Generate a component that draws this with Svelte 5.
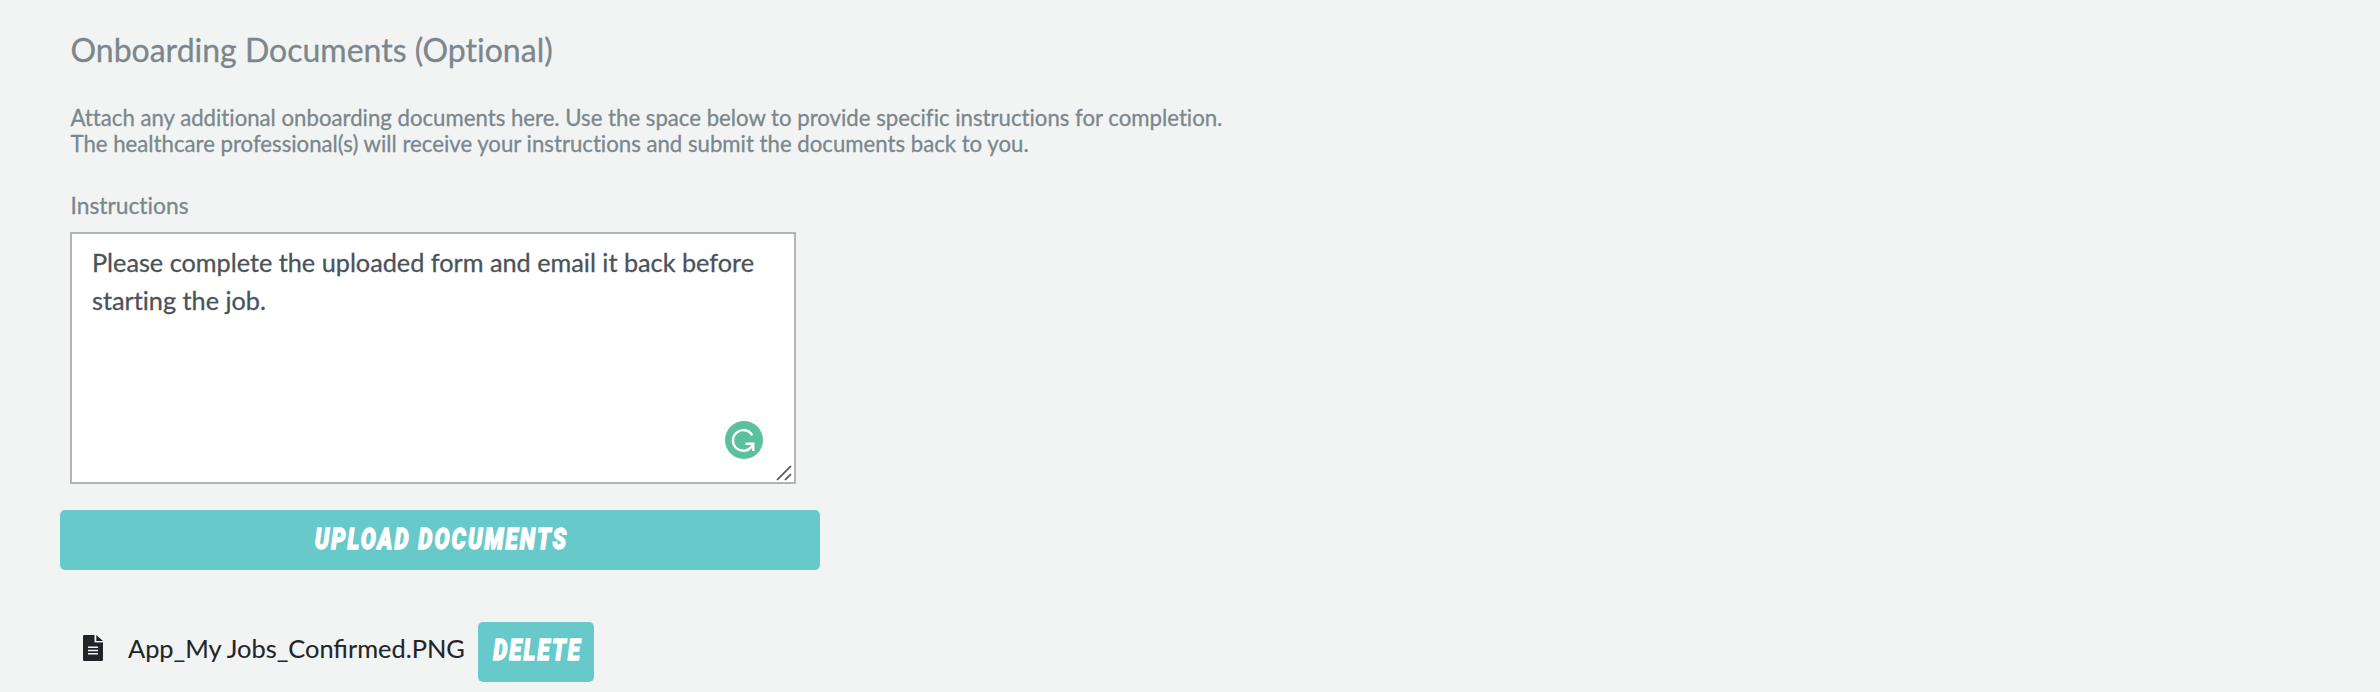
<script lang="ts">
    let instructions = $state('Please complete the uploaded form and email it back before starting the job.')
    let files = $state(['App_My Jobs_Confirmed.PNG'])

    function removeFile(name: string) {
        files = files.filter((file) => file !== name)
    }
</script>


<section class="onboarding">
    <h2>Onboarding Documents (Optional)</h2>

    <p class="description">
        Attach any additional onboarding documents here. Use the space below to provide specific instructions for completion.<br>
        The healthcare professional(s) will receive your instructions and submit the documents back to you.
    </p>

    <label for="instructions">Instructions</label>
    <div class="field">
        <textarea id="instructions" spellcheck="false" bind:value={instructions}></textarea>
        <svg class="checker" viewBox="0 0 38 38">
            <circle cx="19" cy="19" r="19" fill="#5bc19c"/>
            <path d="M27.2 14.3A10.3 10.3 0 1 0 27.2 24.6" fill="none" stroke="#fff" stroke-width="2.4"/>
            <path d="M20.5 22.8H28.3V30" fill="none" stroke="#fff" stroke-width="2.4"/>
            <path d="M24 27L28.2 22.8V27Z" fill="#fff"/>
        </svg>
        <svg class="handle" viewBox="0 0 16 16">
            <path d="M1 15L15 1M9 15L15 9" stroke="#4c4c4c" stroke-width="1.7"/>
        </svg>
    </div>

    <button class="upload"><span>UPLOAD DOCUMENTS</span></button>

    {#each files as file}
        <div class="file">
            <svg class="fileIcon" viewBox="0 0 20 26">
                <path d="M1.3 0H11.7V7.2H20V24.7Q20 26 18.7 26H1.3Q0 26 0 24.7V1.3Q0 0 1.3 0Z" fill="#212529"/>
                <path d="M11.7 0H20V7.2H11.7Z" fill="#f2f4f3"/>
                <path d="M13.3 0L20 5.9H13.3Z" fill="#212529"/>
                <path d="M5 12.3H15M5 15.5H15M5 18.8H15" stroke="#f2f4f3" stroke-width="1.5"/>
            </svg>
            <span class="fileName">{file}</span>
            <button class="delete" onclick={() => removeFile(file)}><span>DELETE</span></button>
        </div>
    {/each}
</section>


<style>
    :global(body){
        margin: 0;
        background-color: #f2f4f3;
    }

    .onboarding{
        box-sizing: border-box;
        height: 692px;
        padding: 30px 60px 0;
        overflow: hidden;
        font-family: Lato, sans-serif;
        font-variant-ligatures: none;
        color: #7b878d;
        -webkit-text-stroke: 0.3px;
    }

    h2{
        margin: 0 0 35px 10.5px;
        font-size: 32px;
        line-height: 40px;
        font-weight: 400;
    }

    .description{
        margin: 0 0 34px 10.5px;
        font-size: 22.2px;
        line-height: 26.4px;
    }

    label{
        display: block;
        margin-left: 10.5px;
        font-size: 22.8px;
        line-height: 27px;
    }

    .field{
        position: relative;
        width: 726px;
        height: 252px;
        margin: 13px 0 26px 10px;
    }

    textarea{
        box-sizing: border-box;
        display: block;
        width: 100%;
        height: 100%;
        padding: 9px 20px;
        border: 2px solid #b3b4b8;
        outline: none;
        resize: none;
        background-color: white;
        color: #4b5359;
        font-family: inherit;
        font-variant-ligatures: none;
        font-size: 25.25px;
        line-height: 38px;
    }

    .checker{
        position: absolute;
        right: 33px;
        bottom: 25px;
        width: 38px;
        height: 38px;
    }

    .handle{
        position: absolute;
        right: 4px;
        bottom: 3px;
        width: 16px;
        height: 16px;
    }

    button{
        height: 60px;
        padding: 0;
        border: none;
        border-radius: 5px;
        background-color: #68c9cb;
        color: white;
        font-family: Roboto, sans-serif;
        font-size: 28.5px;
        font-weight: 900;
        font-style: italic;
        -webkit-text-stroke: 1.3px;
    }

    button span{
        display: inline-block;
        transform: scaleX(0.785);
        letter-spacing: 2.7px;
        white-space: nowrap;
    }

    .upload{
        display: block;
        width: 760px;
        padding-left: 2px;
    }

    .file{
        display: flex;
        align-items: center;
        height: 60px;
        margin-top: 52px;
        color: #212529;
    }

    .fileIcon{
        width: 20px;
        height: 26px;
        margin: 0 25px 8px 23px;
    }

    .fileName{
        width: 350px;
        margin-bottom: 8px;
        font-size: 25.4px;
        font-variant-ligatures: normal;
        -webkit-text-stroke: 0.1px;
    }

    .delete{
        display: flex;
        align-items: center;
        justify-content: center;
        width: 116px;
        padding: 0 0 3px 4px;
    }
</style>
